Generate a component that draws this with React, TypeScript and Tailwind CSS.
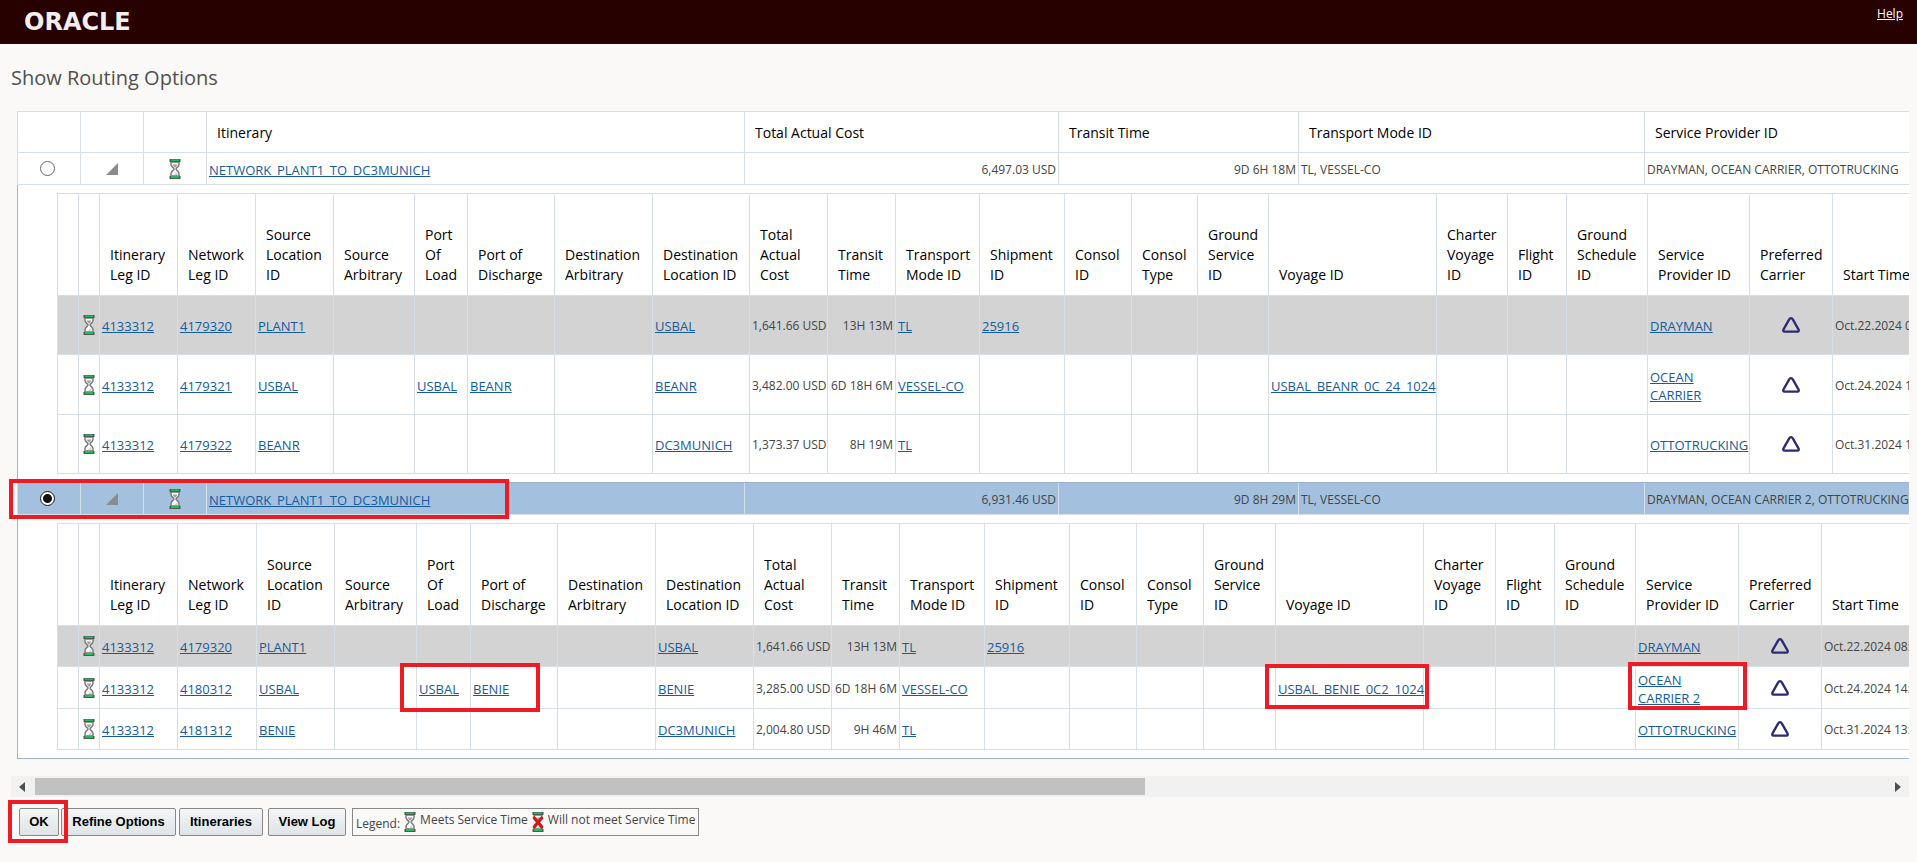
import { useState } from "react";
import clsx from "clsx";

type Leg = {
  legId: string;
  networkLegId: string;
  source: string;
  portOfLoad?: string;
  portOfDischarge?: string;
  destination: string;
  cost: string;
  transit: string;
  mode: string;
  shipment?: string;
  voyage?: string;
  provider: string;
  start: string;
};

type Itinerary = {
  id: string;
  name: string;
  cost: string;
  transit: string;
  modes: string;
  providers: string;
  rowHeights: string[];
  colWidths: number[];
  legs: Leg[];
};

const legHeaders = [
  "",
  "",
  "Itinerary\nLeg ID",
  "Network\nLeg ID",
  "Source\nLocation\nID",
  "Source\nArbitrary",
  "Port\nOf\nLoad",
  "Port of\nDischarge",
  "Destination\nArbitrary",
  "Destination\nLocation ID",
  "Total\nActual\nCost",
  "Transit\nTime",
  "Transport\nMode ID",
  "Shipment\nID",
  "Consol\nID",
  "Consol\nType",
  "Ground\nService\nID",
  "Voyage ID",
  "Charter\nVoyage\nID",
  "Flight\nID",
  "Ground\nSchedule\nID",
  "Service\nProvider ID",
  "Preferred\nCarrier",
  "Start Time",
];

// columns that hold an icon instead of text
const iconColumns = [1, 22];

const mainColWidths = [63, 63, 63, 538, 314, 240, 346, 1400];

const itineraries: Itinerary[] = [
  {
    id: "itinerary-1",
    name: "NETWORK_PLANT1_TO_DC3MUNICH",
    cost: "6,497.03 USD",
    transit: "9D 6H 18M",
    modes: "TL, VESSEL-CO",
    providers: "DRAYMAN, OCEAN CARRIER, OTTOTRUCKING",
    rowHeights: ["h-[59px]", "h-[60px]", "h-[59px]"],
    colWidths: [21, 21, 78, 78, 78, 81, 53, 87, 98, 97, 78, 68, 84, 85, 67, 66, 71, 168, 71, 59, 81, 102, 83, 160],
    legs: [
      { legId: "4133312", networkLegId: "4179320", source: "PLANT1", destination: "USBAL", cost: "1,641.66 USD", transit: "13H 13M", mode: "TL", shipment: "25916", provider: "DRAYMAN", start: "Oct.22.2024 08:" },
      { legId: "4133312", networkLegId: "4179321", source: "USBAL", portOfLoad: "USBAL", portOfDischarge: "BEANR", destination: "BEANR", cost: "3,482.00 USD", transit: "6D 18H 6M", mode: "VESSEL-CO", voyage: "USBAL_BEANR_0C_24_1024", provider: "OCEAN\nCARRIER", start: "Oct.24.2024 14:" },
      { legId: "4133312", networkLegId: "4179322", source: "BEANR", destination: "DC3MUNICH", cost: "1,373.37 USD", transit: "8H 19M", mode: "TL", provider: "OTTOTRUCKING", start: "Oct.31.2024 13:" },
    ],
  },
  {
    id: "itinerary-2",
    name: "NETWORK_PLANT1_TO_DC3MUNICH",
    cost: "6,931.46 USD",
    transit: "9D 8H 29M",
    modes: "TL, VESSEL-CO",
    providers: "DRAYMAN, OCEAN CARRIER 2, OTTOTRUCKING",
    rowHeights: ["h-[41px]", "h-[42px]", "h-[41px]"],
    colWidths: [21, 21, 78, 79, 78, 82, 54, 87, 98, 98, 78, 68, 85, 85, 67, 67, 72, 148, 72, 59, 81, 103, 83, 160],
    legs: [
      { legId: "4133312", networkLegId: "4179320", source: "PLANT1", destination: "USBAL", cost: "1,641.66 USD", transit: "13H 13M", mode: "TL", shipment: "25916", provider: "DRAYMAN", start: "Oct.22.2024 08:" },
      { legId: "4133312", networkLegId: "4180312", source: "USBAL", portOfLoad: "USBAL", portOfDischarge: "BENIE", destination: "BENIE", cost: "3,285.00 USD", transit: "6D 18H 6M", mode: "VESSEL-CO", voyage: "USBAL_BENIE_0C2_1024", provider: "OCEAN\nCARRIER 2", start: "Oct.24.2024 14:" },
      { legId: "4133312", networkLegId: "4181312", source: "BENIE", destination: "DC3MUNICH", cost: "2,004.80 USD", transit: "9H 46M", mode: "TL", provider: "OTTOTRUCKING", start: "Oct.31.2024 13:" },
    ],
  },
];

// red call-out boxes drawn over the page
const callouts = [
  "left-[9px] top-[435px] h-[40px] w-[500px]",
  "left-[400px] top-[619px] h-[49px] w-[140px]",
  "left-[1265px] top-[620px] h-[45px] w-[164px]",
  "left-[1628px] top-[618px] h-[48px] w-[119px]",
  "left-[8px] top-[756px] h-[43px] w-[60px]",
];

const sum = (values: number[]) => values.reduce((a, b) => a + b, 0);

function Hourglass({ failed = false }: { failed?: boolean }) {
  return (
    <svg width="12" height="20" viewBox="0 0 12 20" className="block shrink-0" aria-hidden="true">
      <path d="M2 3 V5.5 C2 8 5 8.5 5 10 C5 11.5 2 12 2 14.5 V17 H10 V14.5 C10 12 7 11.5 7 10 C7 8.5 10 8 10 5.5 V3 Z" fill="#fdfdfd" stroke="#777" strokeWidth="1.4" />
      <path d="M3.5 5.5 H8.5 L6.5 8.5 H5.5 Z" fill="#a0a0a0" />
      <path d="M8.5 12.5 V16 H5 Z" fill="#d5d5d5" />
      <rect x="0.5" y="0" width="11" height="3" fill="#4d5a52" />
      <rect x="2" y="0.5" width="8" height="1.5" fill="#1fbf58" />
      <rect x="0.5" y="17" width="11" height="3" fill="#4d5a52" />
      <rect x="2" y="17" width="8" height="2" fill="#1fbf58" />
      {failed && <path d="M1.5 5 L10.5 16 M10.5 5 L1.5 16" stroke="#d41616" strokeWidth="3" />}
    </svg>
  );
}

function PreferredIcon() {
  return (
    <svg width="18" height="16" viewBox="0 0 18 16" className="mx-auto block" role="img" aria-label="Preferred carrier">
      <path d="M9 1.2 Q10.2 1.2 10.8 2.4 L16.6 12.6 Q17.2 14.6 15.6 14.7 H2.4 Q0.8 14.6 1.4 12.6 L7.2 2.4 Q7.8 1.2 9 1.2 Z" fill="none" stroke="#2b2a75" strokeWidth="2.3" strokeLinejoin="round" />
    </svg>
  );
}

function CellLink({ text }: { text?: string }) {
  if (!text) return null;
  return (
    <a href="#" className="text-[13px] leading-[18px] whitespace-pre text-[#145c9e] underline">
      {text}
    </a>
  );
}

function LegTable({ itinerary }: { itinerary: Itinerary }) {
  const { colWidths, legs, rowHeights } = itinerary;

  return (
    <table className="table-fixed border-collapse" style={{ width: sum(colWidths) }}>
      <colgroup>
        {colWidths.map((w, i) => (
          <col key={i} style={{ width: w }} />
        ))}
      </colgroup>
      <thead>
        <tr className="h-[102px]">
          {legHeaders.map((header, i) => (
            <th key={i} className="border border-[#d6dfe6] pb-[10px] pl-[10px] text-left align-bottom text-sm font-medium whitespace-pre text-black">
              {header}
            </th>
          ))}
        </tr>
      </thead>
      <tbody>
        {legs.map((leg, i) => {
          const cells = [
            null,
            <div className="flex justify-center"><Hourglass /></div>,
            <CellLink text={leg.legId} />,
            <CellLink text={leg.networkLegId} />,
            <CellLink text={leg.source} />,
            null,
            <CellLink text={leg.portOfLoad} />,
            <CellLink text={leg.portOfDischarge} />,
            null,
            <CellLink text={leg.destination} />,
            <div className="text-right">{leg.cost}</div>,
            <div className="text-right">{leg.transit}</div>,
            <CellLink text={leg.mode} />,
            <CellLink text={leg.shipment} />,
            null,
            null,
            null,
            <CellLink text={leg.voyage} />,
            null,
            null,
            null,
            <CellLink text={leg.provider} />,
            <PreferredIcon />,
            leg.start,
          ];
          return (
            <tr key={leg.networkLegId} className={clsx(rowHeights[i], i === 0 && "bg-[#d3d3d3]")}>
              {cells.map((cell, c) => (
                <td key={c} className={clsx("border border-[#d6dfe6] whitespace-nowrap", iconColumns.includes(c) ? "px-0" : "px-[2px] pt-[2px]")}>
                  {cell}
                </td>
              ))}
            </tr>
          );
        })}
      </tbody>
    </table>
  );
}

export default function App() {
  const [selected, setSelected] = useState("itinerary-2");

  return (
    <div className="min-h-screen bg-[#fbf9f8] font-['Open_Sans','Noto_Sans',sans-serif] text-xs text-[#444]">
      {/* Header */}
      <header className="flex h-11 items-start justify-between bg-[#270000] pr-[14px] pl-6 text-white">
        <div className="flex h-11 items-center font-['DejaVu_Sans',sans-serif] text-2xl font-bold text-[#f4efef]">
          ORACLE
        </div>
        <a href="#" className="mt-[5px] leading-[18px] underline">
          Help
        </a>
      </header>

      <main className="relative pr-2 pl-[11px]">
        <h1 className="pt-5 text-xl leading-7 font-medium text-[#505050]">Show Routing Options</h1>

        {/* Itineraries */}
        <div className="mt-[19px] overflow-hidden pl-[6px]">
          <table className="table-fixed border-collapse bg-white" style={{ width: sum(mainColWidths) }}>
            <colgroup>
              {mainColWidths.map((w, i) => (
                <col key={i} style={{ width: w }} />
              ))}
            </colgroup>
            <thead>
              <tr className="h-[41px]">
                {["", "", "", "Itinerary", "Total Actual Cost", "Transit Time", "Transport Mode ID", "Service Provider ID"].map((header, i) => (
                  <th key={i} className="border border-[#d6dfe6] pt-[2px] pl-[10px] text-left text-sm font-medium text-black">
                    {header}
                  </th>
                ))}
              </tr>
            </thead>
            {itineraries.map((itinerary) => (
              <tbody key={itinerary.id}>
                <tr className={clsx("h-8", selected === itinerary.id && "bg-[#a3c1df]")}>
                  <td className="border border-[#d6dfe6]">
                    <input
                      type="radio"
                      name="itinerary"
                      aria-label={itinerary.name}
                      checked={selected === itinerary.id}
                      onChange={() => setSelected(itinerary.id)}
                      className="mr-auto ml-[22px] block size-[15px] appearance-none rounded-full border border-[#666] bg-white checked:border-[#111] checked:bg-[radial-gradient(circle,#111_4px,#fff_5px)]"
                    />
                  </td>
                  <td className="border border-[#d6dfe6]">
                    <button type="button" aria-label="Collapse" className="mx-auto block">
                      <svg width="12" height="12" viewBox="0 0 12 12" className="block">
                        <path d="M12 0 V12 H0 Z" fill="#888c90" />
                      </svg>
                    </button>
                  </td>
                  <td className="border border-[#d6dfe6]">
                    <div className="flex justify-center"><Hourglass /></div>
                  </td>
                  <td className="border border-[#d6dfe6] px-[2px] pt-[2px]"><CellLink text={itinerary.name} /></td>
                  <td className="border border-[#d6dfe6] px-[2px] pt-[2px] text-right">{itinerary.cost}</td>
                  <td className="border border-[#d6dfe6] px-[2px] pt-[2px] text-right">{itinerary.transit}</td>
                  <td className="border border-[#d6dfe6] px-[2px] pt-[2px]">{itinerary.modes}</td>
                  <td className="border border-[#d6dfe6] px-[2px] pt-[2px]">{itinerary.providers}</td>
                </tr>
                <tr>
                  <td colSpan={8} className="border border-[#9fb3d6] border-t-[#d6dfe6] pt-2 pb-2 pl-[39px]">
                    <LegTable itinerary={itinerary} />
                  </td>
                </tr>
              </tbody>
            ))}
          </table>
        </div>

        {/* Horizontal scroll bar */}
        <div className="mt-[17px] flex h-[21px] items-center bg-[#f1f1f1]">
          <button type="button" aria-label="Scroll left" className="w-6 pl-2">
            <svg width="6" height="10" viewBox="0 0 6 10" className="block"><path d="M6 0 V10 L0 5 Z" fill="#505050" /></svg>
          </button>
          <div className="flex-1">
            <div className="h-[17px] w-[60%] bg-[#c1c1c1]" />
          </div>
          <button type="button" aria-label="Scroll right" className="w-6 pl-[10px]">
            <svg width="6" height="10" viewBox="0 0 6 10" className="block"><path d="M0 0 V10 L6 5 Z" fill="#505050" /></svg>
          </button>
        </div>

        {/* Actions and legend */}
        <div className="mt-[11px] flex items-end pl-2 font-['Liberation_Sans',sans-serif] text-[13px] font-bold text-black">
          <button type="button" className="mr-[2px] h-7 w-10 rounded-[2px] border border-[#888] bg-linear-to-b from-[#f4f5f6] to-[#dfe4e7]">OK</button>
          <button type="button" className="mr-[3px] h-7 w-[115px] rounded-[2px] border border-[#888] bg-linear-to-b from-[#f4f5f6] to-[#dfe4e7]">Refine Options</button>
          <button type="button" className="mr-[5px] h-7 w-[84px] rounded-[2px] border border-[#888] bg-linear-to-b from-[#f4f5f6] to-[#dfe4e7]">Itineraries</button>
          <button type="button" className="mr-[6px] h-7 w-[78px] rounded-[2px] border border-[#888] bg-linear-to-b from-[#f4f5f6] to-[#dfe4e7]">View Log</button>
          <div className="flex h-7 items-center border border-[#888] px-[3px] font-['Open_Sans','Noto_Sans',sans-serif] text-xs font-medium text-[#444]">
            <span className="mt-1 mr-1">Legend:</span>
            <Hourglass />
            <span className="mr-1 mb-1 ml-1">Meets Service Time</span>
            <Hourglass failed />
            <span className="mb-1 ml-1">Will not meet Service Time</span>
          </div>
        </div>

        {callouts.map((box) => (
          <div key={box} className={clsx("pointer-events-none absolute border-4 border-[#ed1c24]", box)} />
        ))}
      </main>
    </div>
  );
}
